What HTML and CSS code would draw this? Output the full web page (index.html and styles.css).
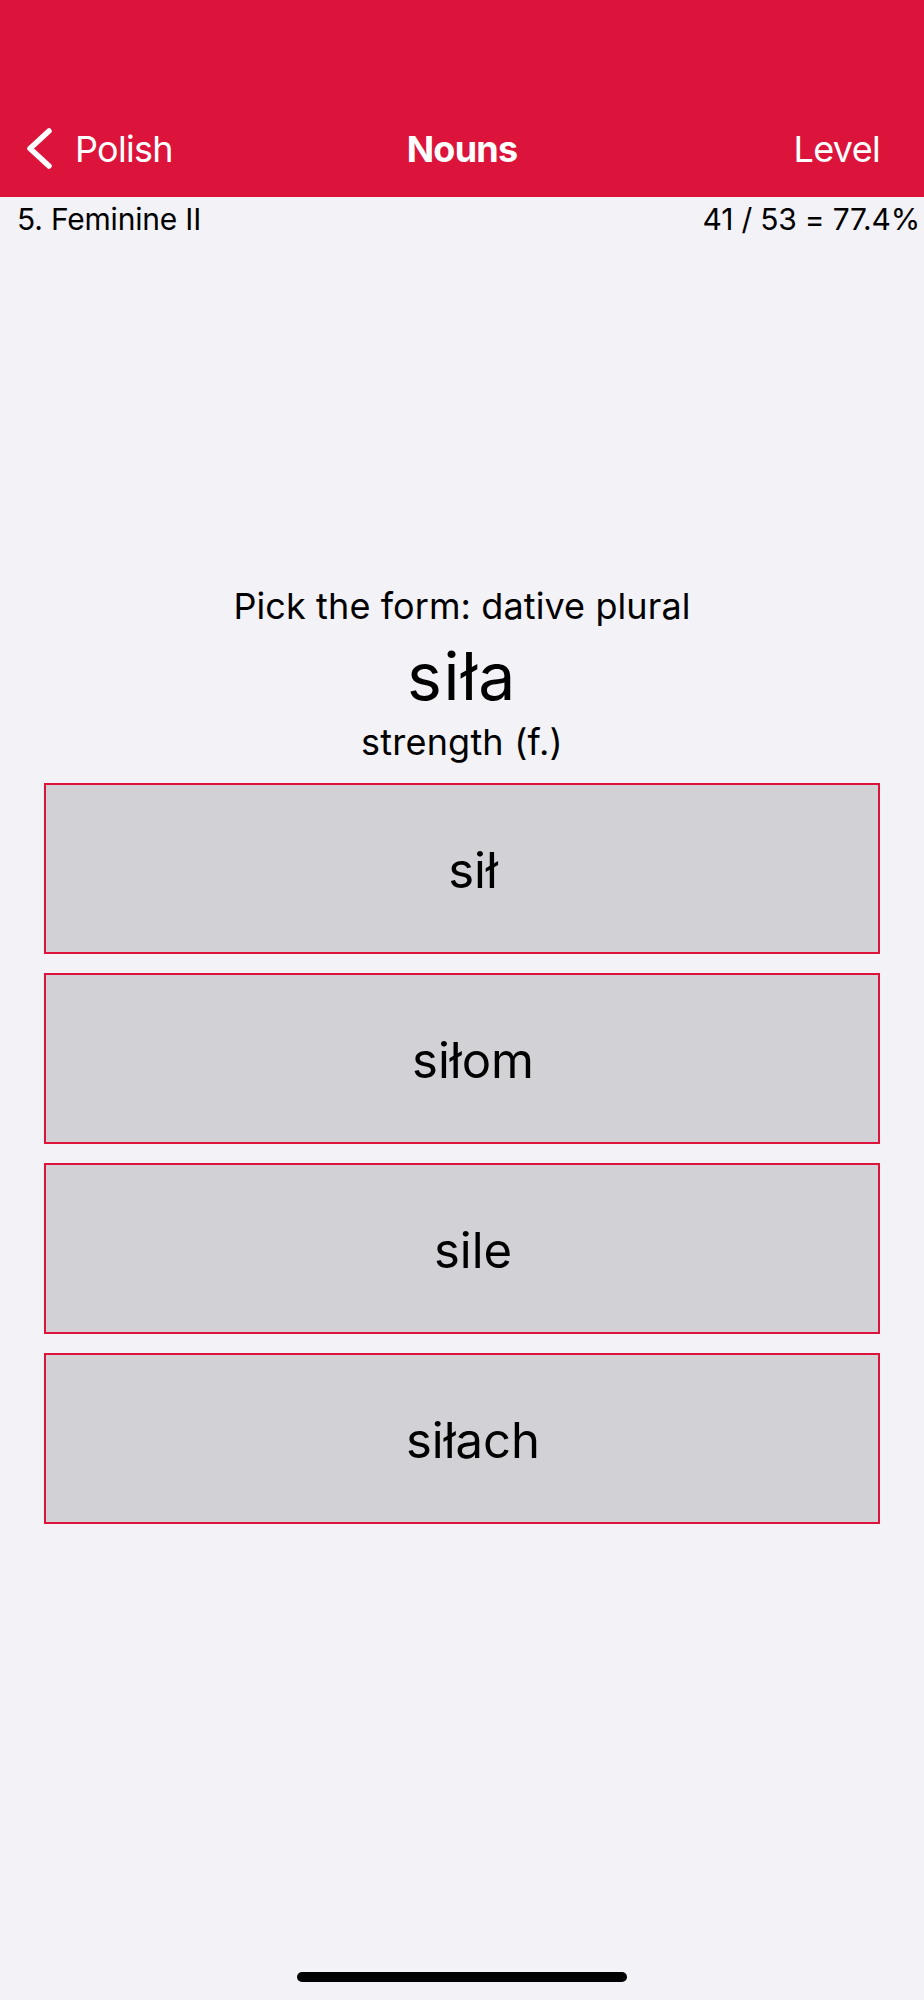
FILE: index.html
```html
<!DOCTYPE html>
<html lang="en">
<head>
  <meta charset="UTF-8">
  <meta name="viewport" content="width=device-width, initial-scale=1.0">
  <title>Nouns</title>
  <link rel="stylesheet" href="styles.css">
</head>
<body>
  <header class="topbar">
    <nav class="navbar">
      <a href="#" class="back">
        <svg class="chevron" width="30" height="46" viewBox="0 0 30 46">
          <path d="M24 5 L5 22.5 L24 40" fill="none" stroke="#fff" stroke-width="5.5" stroke-linecap="round" stroke-linejoin="round"/>
        </svg>
        <span>Polish</span>
      </a>
      <h1 class="title">Nouns</h1>
      <a href="#" class="level">Level</a>
    </nav>
  </header>

  <div class="status">
    <span>5. Feminine II</span>
    <span>41 / 53 = 77.4%</span>
  </div>

  <main class="quiz">
    <p class="prompt">Pick the form: dative plural</p>
    <p class="word">siła</p>
    <p class="meaning">strength (f.)</p>

    <ul class="answers">
      <li><button class="answer">sił</button></li>
      <li><button class="answer">siłom</button></li>
      <li><button class="answer">sile</button></li>
      <li><button class="answer">siłach</button></li>
    </ul>
  </main>

  <div class="home-bar"></div>
</body>
</html>
```

FILE: styles.css
```css
* {margin: 0; padding: 0; box-sizing: border-box;}

ul, li {
  list-style: none;
}
body {
  position: relative;
  min-height: 2000px;
  background-color: #f2f2f7;
  color: #000;
  font-family: Inter, "Noto Sans", sans-serif;
}
a {
  color: inherit;
  text-decoration: none;
}

/* 상단 빨간 바 */
.topbar {
  height: 197px;
  padding-top: 101px;
  background-color: #dc143c;
  color: #fff;
}
.navbar {
  display: grid;
  grid-template-columns: 1fr auto 1fr;
  align-items: center;
  height: 96px;
  font-size: 36px;
  letter-spacing: -0.7px;
}
.back {
  display: flex;
  align-items: center;
  gap: 20px;
  padding-left: 25px;
}
.chevron {
  display: block;
}
.title {
  font-size: 36px;
  font-weight: 700;
  letter-spacing: -0.8px;
}
.level {
  justify-self: end;
  padding-right: 44px;
}

.status {
  display: flex;
  justify-content: space-between;
  padding: 3px 4px 0 17px;
  font-size: 30px;
  line-height: 38px;
  letter-spacing: -0.2px;
}

.quiz {
  padding-top: 346px;
  text-align: center;
}
.prompt {
  font-size: 36px;
  line-height: 44px;
  letter-spacing: 0.1px;
}
.word {
  margin-top: 8px;
  font-size: 66px;
  line-height: 80px;
  letter-spacing: 1.5px;
}
.meaning {
  margin-top: 4px;
  font-size: 36px;
  line-height: 44px;
  letter-spacing: 0.2px;
}

.answers {
  display: flex;
  flex-direction: column;
  gap: 19px;
  margin: 19px 44px 0;
}
.answer {
  display: flex;
  align-items: center;
  justify-content: center;
  width: 100%;
  height: 171px;
  padding: 4px 0 0 22px;
  border: 2px solid #dc143c;
  background-color: #d1d1d6;
  color: #000;
  font-family: inherit;
  font-size: 49px;
  letter-spacing: 0;
}

/* 홈 인디케이터 */
.home-bar {
  position: absolute;
  left: 297px;
  bottom: 18px;
  width: 330px;
  height: 10px;
  border-radius: 5px;
  background-color: #000;
}
```
